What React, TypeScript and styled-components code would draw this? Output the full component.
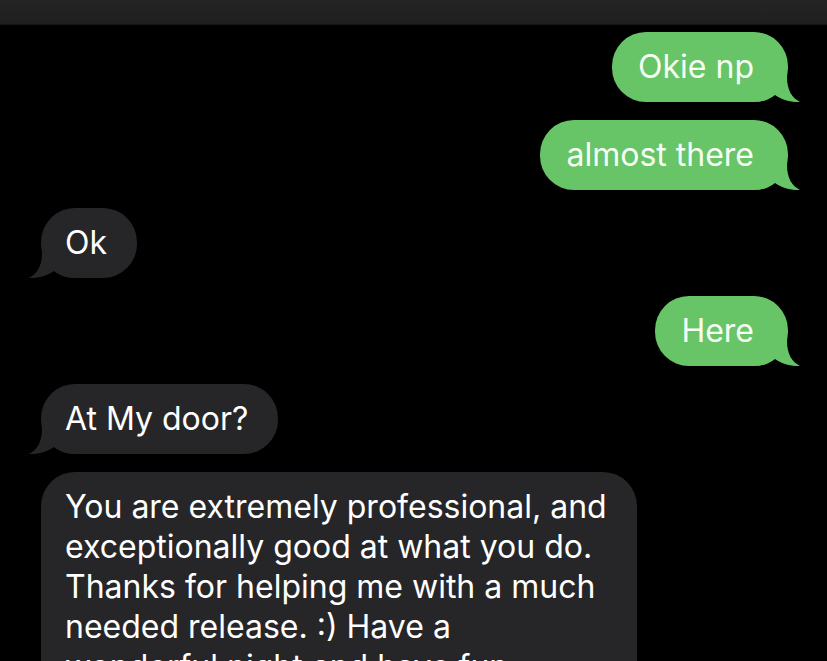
import React from 'react';
import styled, { createGlobalStyle } from 'styled-components';

const GlobalStyle = createGlobalStyle`
  html, body {
    margin: 0;
    padding: 0;
    background: #000;
  }
  body {
    font-family: Inter, "Noto Sans", "Liberation Sans", sans-serif;
    -webkit-font-smoothing: antialiased;
  }
`;

const Screen = styled.div`
  width: 827px;
  height: 661px;
  background: #000;
  overflow: hidden;
  display: flex;
  flex-direction: column;
`;

const NavBar = styled.div`
  height: 24px;
  flex-shrink: 0;
  background: linear-gradient(#242424, #1f1f1f);
  border-bottom: 1px solid #151515;
`;

const Thread = styled.div`
  display: flex;
  flex-direction: column;
  gap: 18px;
  padding: 7px 39px 0 41px;
`;

type Side = 'in' | 'out';

const Bubble = styled.div<{ $side: Side }>`
  position: relative;
  isolation: isolate;
  align-self: ${(p) => (p.$side === 'out' ? 'flex-end' : 'flex-start')};
  max-width: 596px;
  box-sizing: border-box;
  padding: ${(p) => (p.$side === 'out' ? '15px 34px 15px 26px' : '15px 30px 15px 24px')};
  border-radius: 34px;
  background: ${(p) => (p.$side === 'out' ? '#67c467' : '#262628')};
  color: ${(p) => (p.$side === 'out' ? '#f6fff4' : '#ffffff')};
  font-size: 32px;
  line-height: 40px;
`;

const TailSvg = styled.svg<{ $side: Side }>`
  position: absolute;
  z-index: -1;
  bottom: 0;
  width: 44px;
  height: 37px;
  ${(p) => (p.$side === 'out' ? 'right: -13px;' : 'left: -13px; transform: scaleX(-1);')}
`;

const Tail = ({ side }: { side: Side }) => (
  <TailSvg $side={side} viewBox="0 0 44 37">
    <path
      d="M0 0 H30 V12 C30 25 35 33 43 37 C35 37.5 25 35 18 30 C13 34 7 36.5 0 36.5 Z"
      fill={side === 'out' ? '#67c467' : '#262628'}
    />
  </TailSvg>
);

interface Message {
  side: Side;
  text: string;
  tail: boolean;
}

const messages: Message[] = [
  { side: 'out', text: 'Okie np', tail: true },
  { side: 'out', text: 'almost there', tail: true },
  { side: 'in', text: 'Ok', tail: true },
  { side: 'out', text: 'Here', tail: true },
  { side: 'in', text: 'At My door?', tail: true },
  {
    side: 'in',
    text: 'You are extremely professional, and exceptionally good at what you do. Thanks for helping me with a much needed release. :) Have a wonderful night and have fun',
    tail: false,
  },
];

export default function App() {
  return (
    <>
      <GlobalStyle />
      <Screen>
        <NavBar />
        <Thread>
          {messages.map((m, i) => (
            <Bubble key={i} $side={m.side}>
              {m.text}
              {m.tail && <Tail side={m.side} />}
            </Bubble>
          ))}
        </Thread>
      </Screen>
    </>
  );
}
